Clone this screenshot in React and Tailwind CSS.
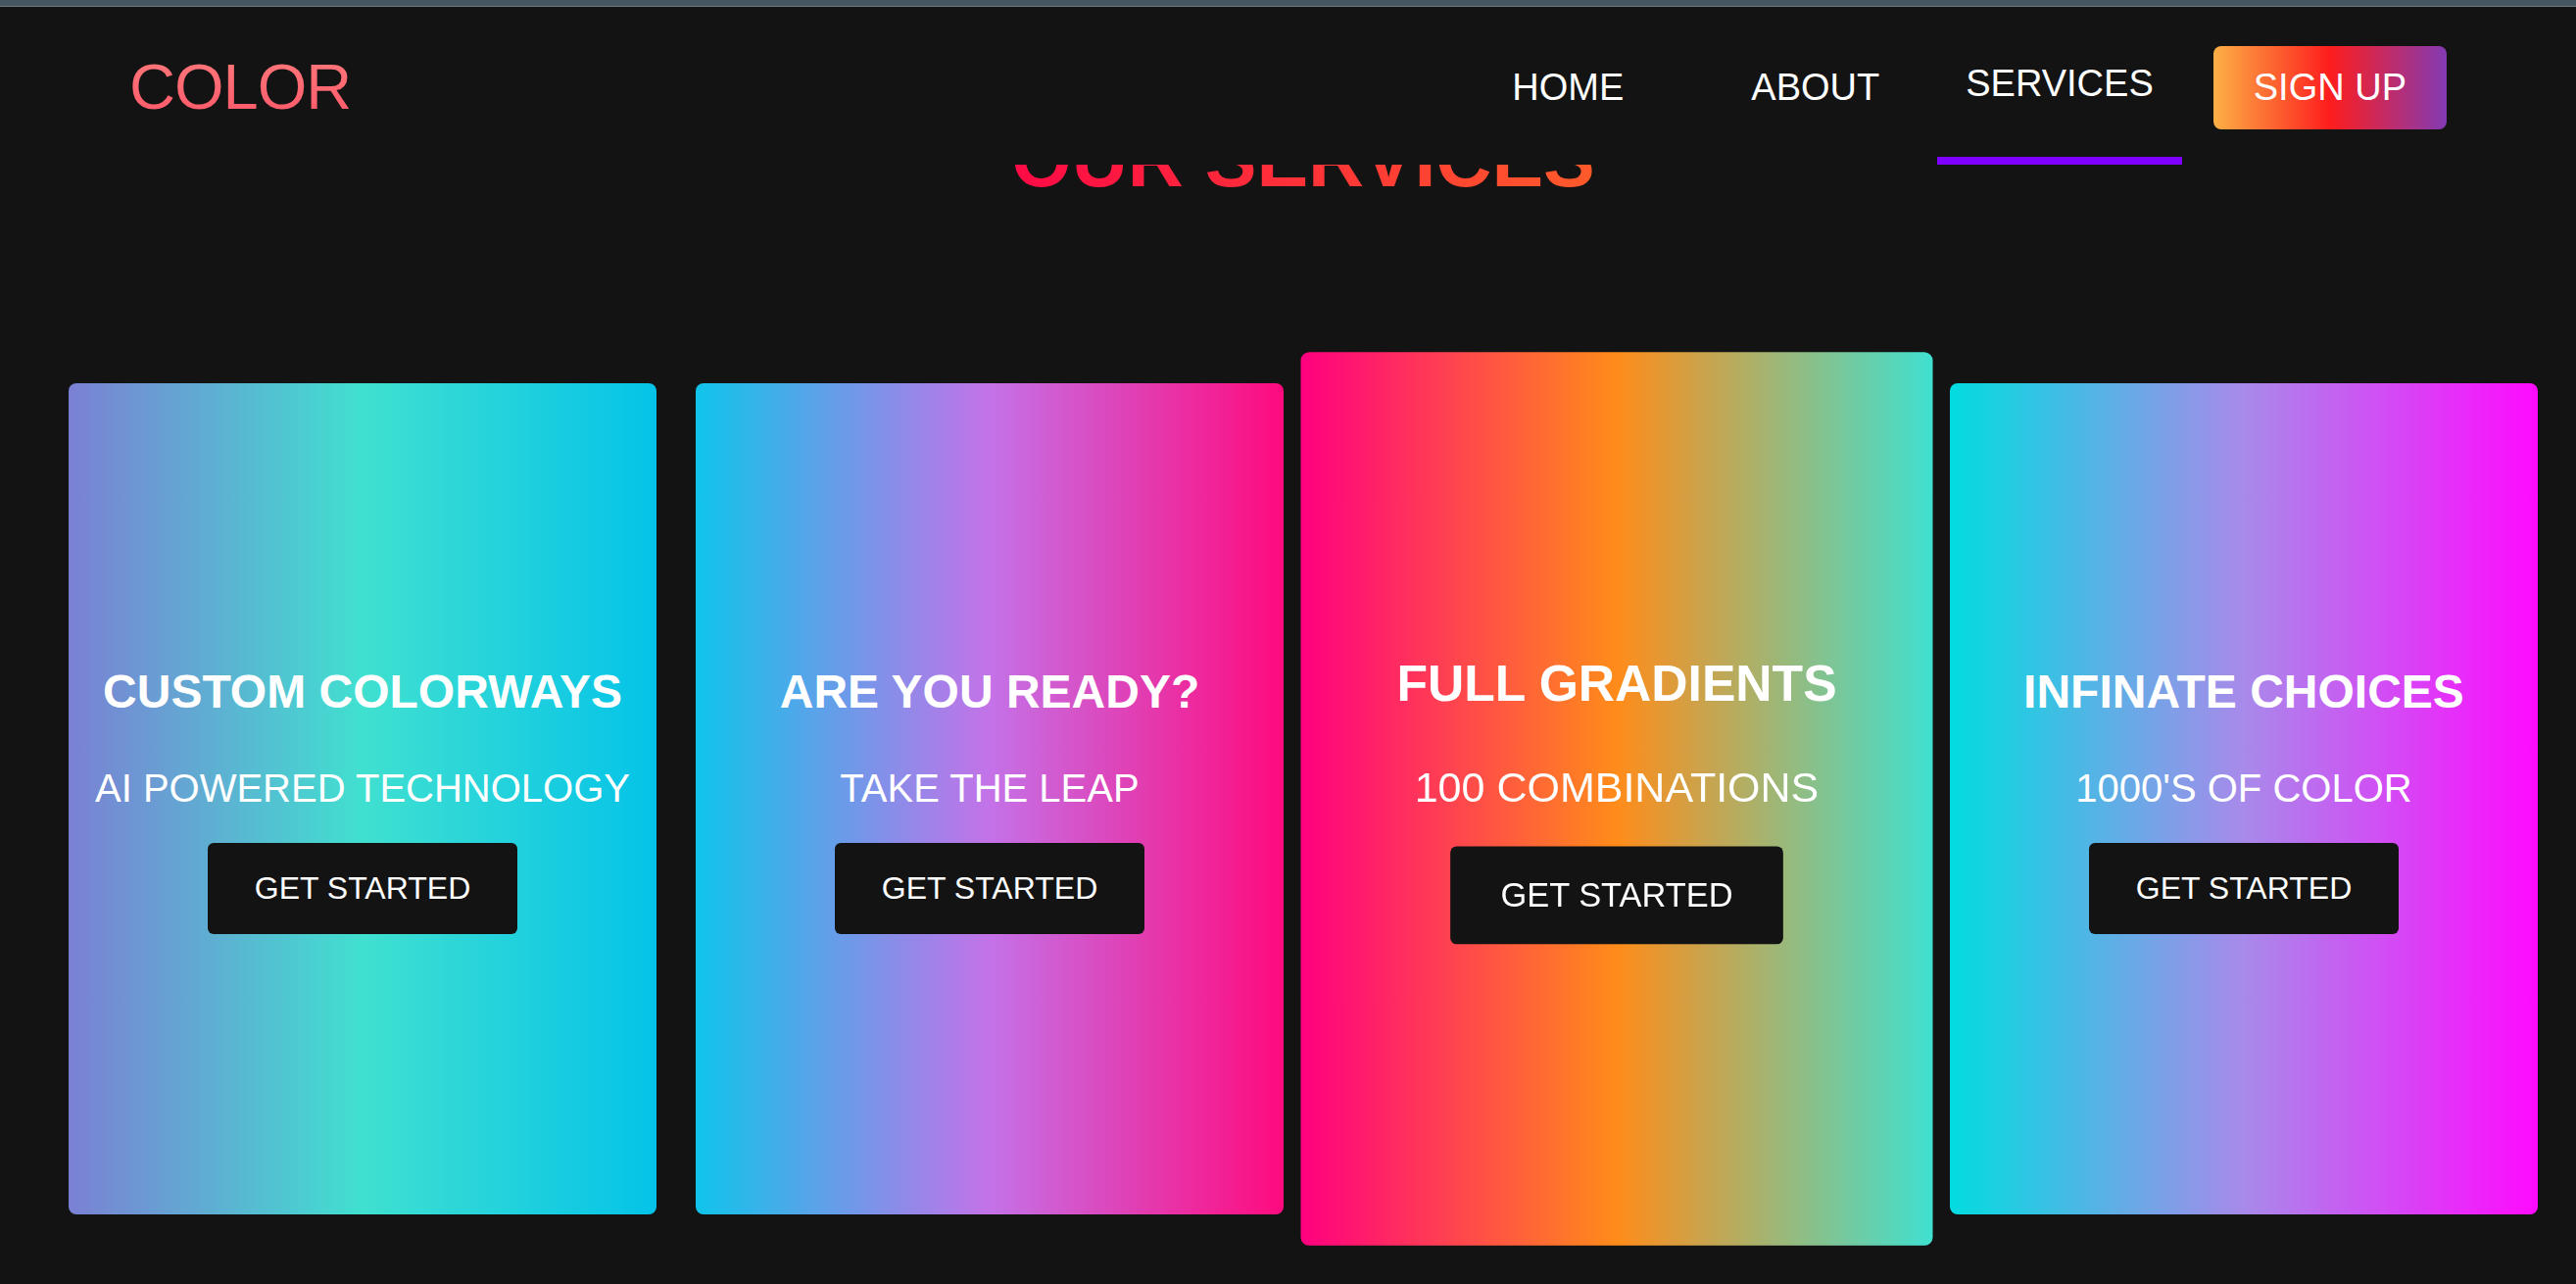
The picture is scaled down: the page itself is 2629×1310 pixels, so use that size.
import React from "react";

const cards = [
    {
        title: "CUSTOM COLORWAYS",
        sub: "AI POWERED TECHNOLOGY",
        bg: "bg-[linear-gradient(90deg,#7b80d4_0%,#40e0d0_50%,#04c3e8_100%)]",
    },
    {
        title: "ARE YOU READY?",
        sub: "TAKE THE LEAP",
        bg: "bg-[linear-gradient(90deg,#10c4ea_0%,#c472e8_50%,#ff0a7e_100%)]",
    },
    {
        title: "FULL GRADIENTS",
        sub: "100 COMBINATIONS",
        bg: "bg-[linear-gradient(90deg,#ff0080_0%,#ff8c1a_50%,#40e0d0_100%)]",
        active: true,
    },
    {
        title: "INFINATE CHOICES",
        sub: "1000'S OF COLOR",
        bg: "bg-[linear-gradient(90deg,#02dce0_0%,#a88aea_50%,#ff0aff_100%)]",
    },
];

function Card({ title, sub, bg, active }) {
    return (
        <div
            className={`w-[600px] h-[848px] shrink-0 rounded-lg flex flex-col items-center justify-center text-white ${bg} ${
                active ? "scale-[1.075] relative z-[1]" : ""
            }`}
        >
            <h2 className="text-[48px] leading-[56px] font-bold">{title}</h2>
            <p className="mt-[47px] text-[40px] leading-[46px]">{sub}</p>
            <button className="mt-[33px] h-[93px] px-12 rounded-md bg-[#131313] text-[32px] text-white">
                GET STARTED
            </button>
        </div>
    );
}

export default function App() {
    return (
        <div
            className="relative min-h-[1310px] bg-[#131313] overflow-hidden"
            style={{ fontFamily: '"Liberation Sans", Arial, sans-serif' }}
        >
            <header className="absolute top-0 left-0 right-0 z-10 bg-[#131313]">
                <div className="h-[6px] bg-[#455660]" />
                <div className="h-px bg-[#6e7a82]" />
                <div className="h-[161px] pt-[3px] px-[132px] flex items-center justify-between">
                    <a className="text-[65px] tracking-[-1px] bg-[linear-gradient(180deg,#ff8080,#ff5064)] bg-clip-text text-transparent">
                        COLOR
                    </a>
                    <nav className="h-full flex items-center text-[38px] text-white">
                        <a>HOME</a>
                        <a className="ml-[130px]">ABOUT</a>
                        <a className="ml-[59px] self-stretch flex items-center px-[29px] border-b-[8px] border-[#8000ff]">
                            SERVICES
                        </a>
                        <button className="ml-[32px] h-[85px] px-[41px] rounded-lg bg-[linear-gradient(90deg,#fcb045,#fd1d1d,#833ab4)] text-white">
                            SIGN UP
                        </button>
                    </nav>
                </div>
            </header>

            <main className="pt-[117px] ml-[70px] w-[2520px]">
                <div className="text-center">
                    <h1 className="inline-block text-[79px] leading-[92px] font-bold bg-[linear-gradient(90deg,#ff0a46,#ff5a2a)] bg-clip-text text-transparent">
                        OUR SERVICES
                    </h1>
                </div>
                <section className="mt-[182px] flex gap-[40px]">
                    {cards.map((c) => (
                        <Card key={c.title} {...c} />
                    ))}
                </section>
            </main>
        </div>
    );
}
